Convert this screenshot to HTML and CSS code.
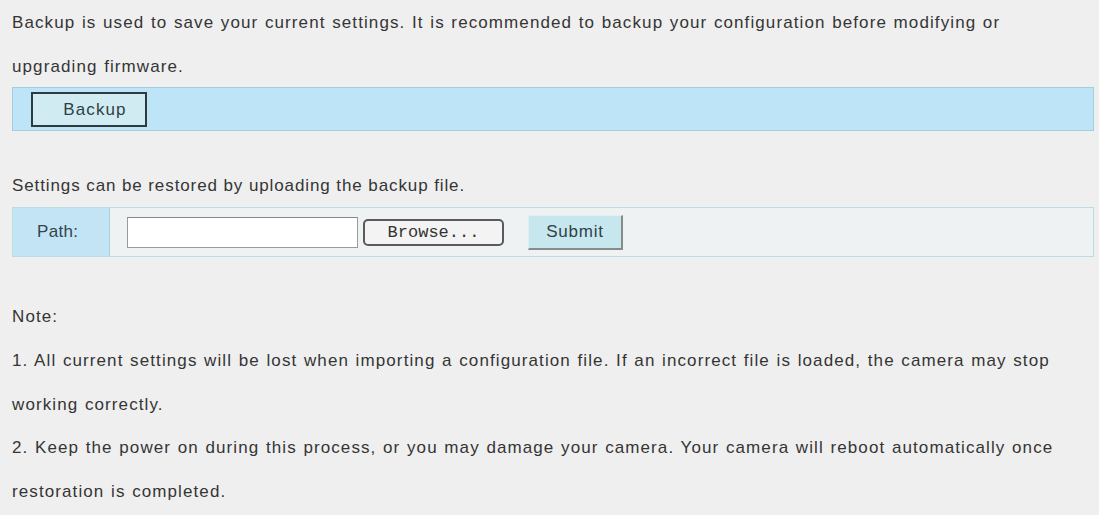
FILE: index.html
```html
<!DOCTYPE html>
<html lang="en">
<head>
  <meta charset="UTF-8">
  <title>Backup &amp; Restore</title>
  <link rel="stylesheet" href="styles.css">
</head>
<body>
  <div class="backup-page">
    <p class="intro">Backup is used to save your current settings. It is recommended to backup your configuration before modifying or<br>upgrading firmware.</p>

    <div class="backup-bar">
      <button class="btn-backup">Backup</button>
    </div>

    <p class="restore-text">Settings can be restored by uploading the backup file.</p>

    <div class="restore-row">
      <div class="restore-label">Path:</div>
      <div class="restore-fields">
        <input type="text" class="path-input">
        <button class="btn-browse">Browse...</button>
        <button class="btn-submit">Submit</button>
      </div>
    </div>

    <div class="notes">
      <p>Note:</p>
      <p>1. All current settings will be lost when importing a configuration file. If an incorrect file is loaded, the camera may stop<br>working correctly.</p>
      <p>2. Keep the power on during this process, or you may damage your camera. Your camera will reboot automatically once<br>restoration is completed.</p>
    </div>
  </div>
</body>
</html>
```

FILE: styles.css
```css
body {
  margin: 0;
  background-color: #efefef;
  font-family: 'Liberation Sans', Arial, sans-serif;
  font-size: 17px;
  letter-spacing: 1.1px;
  word-spacing: 0.8px;
  color: #353535;
}

.backup-page {
  padding: 0 5px 0 12px;
}

p {
  margin: 0;
}

.intro {
  line-height: 44px;
  margin-top: 1px;
}

/* Blue bar with backup button */
.backup-bar {
  background: #bee4f7;
  border: 1px solid #a3cde0;
  height: 42px;
  margin-top: -2px;
  display: flex;
  align-items: center;
  padding-left: 18px;
}

.btn-backup {
  width: 116px;
  height: 35px;
  margin-top: 1px;
  background: #d0ecf2;
  border: 2px solid #2c3b3d;
  font-family: inherit;
  font-size: 17px;
  letter-spacing: 1.1px;
  color: #2f3f48;
  padding: 0 0 0 12px;
}

.restore-text {
  line-height: 44px;
  margin-top: 33px;
  letter-spacing: 0.9px;
  word-spacing: 0;
}

/* Path row */
.restore-row {
  display: flex;
  height: 48px;
  margin-top: -1px;
  border: 1px solid #b9dce6;
  background: #eef2f3;
}

.restore-label {
  width: 72px;
  padding-left: 24px;
  background: #c2e4f5;
  border-right: 1px solid #a9d0df;
  display: flex;
  align-items: center;
  color: #34444d;
  letter-spacing: 0.3px;
}

.restore-fields {
  display: flex;
  align-items: center;
  padding-left: 17px;
}

.path-input {
  width: 229px;
  height: 29px;
  padding: 0;
  border: 1px solid #9a9a9a;
  border-top-color: #888;
  background: #fff;
  margin-top: 1px;
}

.btn-browse {
  width: 141px;
  height: 27px;
  margin-left: 5px;
  margin-top: 1px;
  background: #f3f3f3;
  border: 2px solid #5a5a5a;
  border-radius: 5px;
  font-family: 'Liberation Mono', 'Courier New', monospace;
  font-size: 17px;
  letter-spacing: 0;
  color: #333;
  padding: 0;
}

.btn-submit {
  width: 95px;
  height: 35px;
  margin-left: 24px;
  background: #c7e7ef;
  border: 1px solid #e2eef0;
  border-right: 2px solid #8a8a8a;
  border-bottom: 2px solid #8a8a8a;
  font-family: inherit;
  font-size: 17px;
  letter-spacing: 0.8px;
  color: #2f3f48;
  padding: 0;
}

.notes {
  margin-top: 38px;
  line-height: 43.75px;
}
```
